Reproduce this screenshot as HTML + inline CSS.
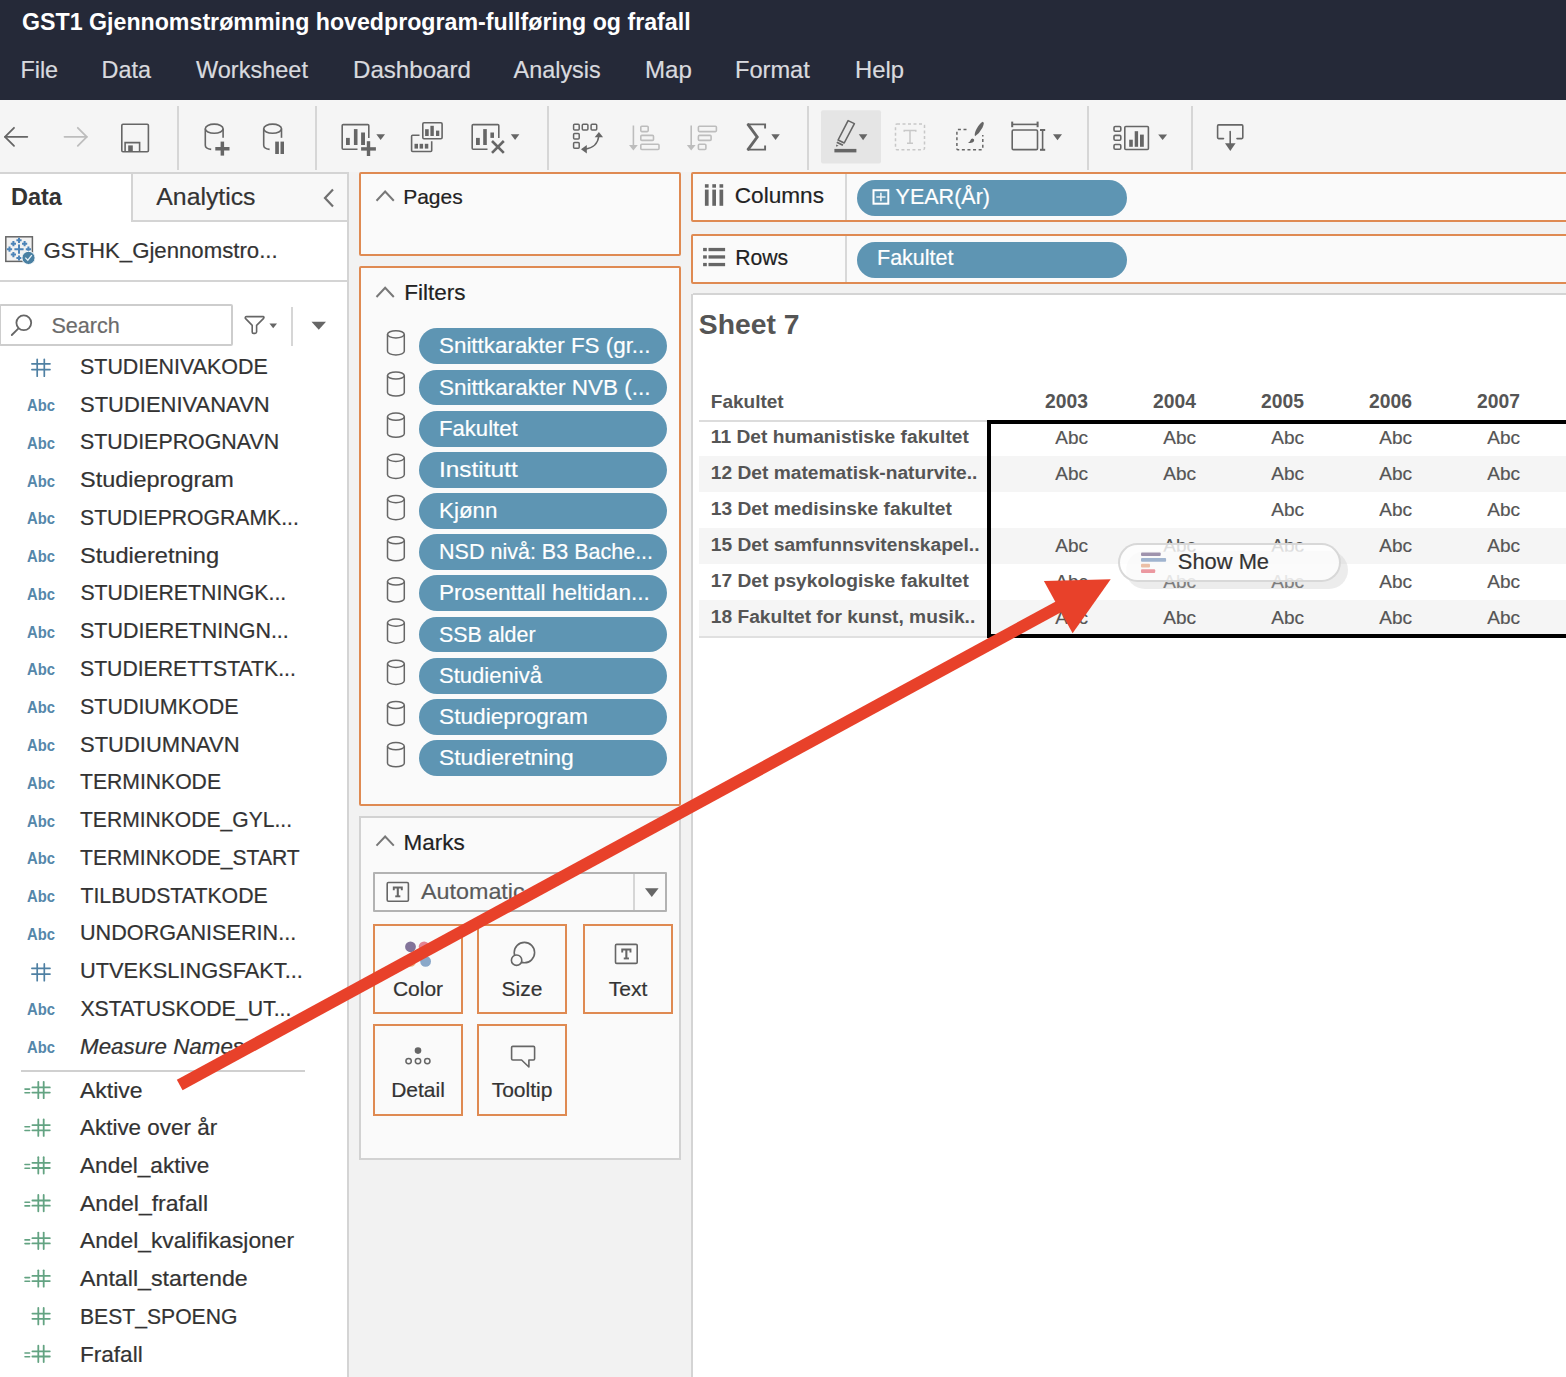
<!DOCTYPE html>
<html><head><meta charset="utf-8"><style>
html,body{margin:0;padding:0;width:1566px;height:1377px;overflow:hidden;background:#fff;font-family:"Liberation Sans", sans-serif;}
.tk{-webkit-text-stroke:0.2px currentColor;}
</style></head><body>
<div style="position:absolute;left:0px;top:0px;width:1566px;height:100px;background:#252938"></div><div style="position:absolute;left:22px;top:11.36px;font-size:23.2px;line-height:1;color:#ffffff;font-weight:bold;font-style:normal;white-space:nowrap;">GST1 Gjennomstrømming hovedprogram-fullføring og frafall</div><div class="tk" style="position:absolute;left:20.4px;top:59.19px;font-size:23.4px;line-height:1;color:#d9dadf;font-weight:normal;font-style:normal;white-space:nowrap;">File</div><div class="tk" style="position:absolute;left:101.6px;top:59.19px;font-size:23.4px;line-height:1;color:#d9dadf;font-weight:normal;font-style:normal;white-space:nowrap;">Data</div><div class="tk" style="position:absolute;left:196.2px;top:59.19px;font-size:23.4px;line-height:1;color:#d9dadf;font-weight:normal;font-style:normal;white-space:nowrap;transform:scaleX(1.0050);transform-origin:0 0;">Worksheet</div><div class="tk" style="position:absolute;left:352.6px;top:59.19px;font-size:23.4px;line-height:1;color:#d9dadf;font-weight:normal;font-style:normal;white-space:nowrap;transform:scaleX(1.0300);transform-origin:0 0;">Dashboard</div><div class="tk" style="position:absolute;left:513.6px;top:59.19px;font-size:23.4px;line-height:1;color:#d9dadf;font-weight:normal;font-style:normal;white-space:nowrap;">Analysis</div><div class="tk" style="position:absolute;left:645px;top:59.19px;font-size:23.4px;line-height:1;color:#d9dadf;font-weight:normal;font-style:normal;white-space:nowrap;transform:scaleX(1.0300);transform-origin:0 0;">Map</div><div class="tk" style="position:absolute;left:735.4px;top:59.19px;font-size:23.4px;line-height:1;color:#d9dadf;font-weight:normal;font-style:normal;white-space:nowrap;transform:scaleX(1.0100);transform-origin:0 0;">Format</div><div class="tk" style="position:absolute;left:855.4px;top:59.19px;font-size:23.4px;line-height:1;color:#d9dadf;font-weight:normal;font-style:normal;white-space:nowrap;transform:scaleX(1.0200);transform-origin:0 0;">Help</div><div style="position:absolute;left:0px;top:100px;width:1566px;height:72px;background:#f5f5f5"></div><div style="position:absolute;left:177px;top:106px;width:2px;height:64px;background:#d6d6d6"></div><div style="position:absolute;left:315px;top:106px;width:2px;height:64px;background:#d6d6d6"></div><div style="position:absolute;left:547px;top:106px;width:2px;height:64px;background:#d6d6d6"></div><div style="position:absolute;left:807px;top:106px;width:2px;height:64px;background:#d6d6d6"></div><div style="position:absolute;left:1087px;top:106px;width:2px;height:64px;background:#d6d6d6"></div><div style="position:absolute;left:1191px;top:106px;width:2px;height:64px;background:#d6d6d6"></div><div style="position:absolute;left:0px;top:172px;width:348px;height:1205px;background:#ffffff"></div><div style="position:absolute;left:347px;top:172px;width:2px;height:1205px;background:#d4d4d4"></div><div style="position:absolute;left:0px;top:172px;width:348px;height:2px;background:#d4d4d4"></div><div style="position:absolute;left:131px;top:174px;width:216px;height:48px;background:#f8f8f8;border-left:2px solid #d4d4d4;border-bottom:2px solid #d4d4d4;box-sizing:border-box"></div><div style="position:absolute;left:11px;top:185.71px;font-size:23.5px;line-height:1;color:#333;font-weight:bold;font-style:normal;white-space:nowrap;">Data</div><div class="tk" style="position:absolute;left:156.3px;top:184.81px;font-size:24.8px;line-height:1;color:#333;font-weight:normal;font-style:normal;white-space:nowrap;">Analytics</div><svg style="position:absolute;left:320px;top:186px;" width="18" height="24" viewBox="0 0 18 24"><polyline points="13,3.5 5,12 13,20.5" fill="none" stroke="#707070" stroke-width="2.2"/></svg><div class="tk" style="position:absolute;left:43.4px;top:239.81px;font-size:22.2px;line-height:1;color:#333;font-weight:normal;font-style:normal;white-space:nowrap;">GSTHK_Gjennomstro...</div><div style="position:absolute;left:0px;top:280px;width:348px;height:2px;background:#d4d4d4"></div><div style="position:absolute;left:-1px;top:304px;width:233.5px;height:42px;border:2px solid #cdcdcd;box-sizing:border-box;background:#fff;border-radius:2px"></div><div class="tk" style="position:absolute;left:51.4px;top:314.52px;font-size:21.6px;line-height:1;color:#6b6b6b;font-weight:normal;font-style:normal;white-space:nowrap;">Search</div><div class="tk" style="position:absolute;left:80.4px;top:356.77px;font-size:21.3px;line-height:1;color:#333;font-weight:normal;font-style:normal;white-space:nowrap;transform:scaleX(1.0065);transform-origin:0 0;">STUDIENIVAKODE</div><div class="tk" style="position:absolute;left:80.4px;top:394.55px;font-size:21.3px;line-height:1;color:#333;font-weight:normal;font-style:normal;white-space:nowrap;transform:scaleX(1.0319);transform-origin:0 0;">STUDIENIVANAVN</div><div style="position:absolute;left:26.6px;top:397.97px;font-size:15.6px;line-height:1;color:#5587aa;font-weight:bold;font-style:normal;white-space:nowrap;transform:scaleX(0.9500);transform-origin:0 0;">Abc</div><div class="tk" style="position:absolute;left:80.4px;top:432.33px;font-size:21.3px;line-height:1;color:#333;font-weight:normal;font-style:normal;white-space:nowrap;transform:scaleX(1.0036);transform-origin:0 0;">STUDIEPROGNAVN</div><div style="position:absolute;left:26.6px;top:435.75px;font-size:15.6px;line-height:1;color:#5587aa;font-weight:bold;font-style:normal;white-space:nowrap;transform:scaleX(0.9500);transform-origin:0 0;">Abc</div><div class="tk" style="position:absolute;left:80.4px;top:470.11px;font-size:21.3px;line-height:1;color:#333;font-weight:normal;font-style:normal;white-space:nowrap;transform:scaleX(1.1014);transform-origin:0 0;">Studieprogram</div><div style="position:absolute;left:26.6px;top:473.53px;font-size:15.6px;line-height:1;color:#5587aa;font-weight:bold;font-style:normal;white-space:nowrap;transform:scaleX(0.9500);transform-origin:0 0;">Abc</div><div class="tk" style="position:absolute;left:80.4px;top:507.89px;font-size:21.3px;line-height:1;color:#333;font-weight:normal;font-style:normal;white-space:nowrap;transform:scaleX(0.9945);transform-origin:0 0;">STUDIEPROGRAMK...</div><div style="position:absolute;left:26.6px;top:511.31px;font-size:15.6px;line-height:1;color:#5587aa;font-weight:bold;font-style:normal;white-space:nowrap;transform:scaleX(0.9500);transform-origin:0 0;">Abc</div><div class="tk" style="position:absolute;left:80.4px;top:545.67px;font-size:21.3px;line-height:1;color:#333;font-weight:normal;font-style:normal;white-space:nowrap;transform:scaleX(1.1081);transform-origin:0 0;">Studieretning</div><div style="position:absolute;left:26.6px;top:549.09px;font-size:15.6px;line-height:1;color:#5587aa;font-weight:bold;font-style:normal;white-space:nowrap;transform:scaleX(0.9500);transform-origin:0 0;">Abc</div><div class="tk" style="position:absolute;left:80.4px;top:583.45px;font-size:21.3px;line-height:1;color:#333;font-weight:normal;font-style:normal;white-space:nowrap;">STUDIERETNINGK...</div><div style="position:absolute;left:26.6px;top:586.87px;font-size:15.6px;line-height:1;color:#5587aa;font-weight:bold;font-style:normal;white-space:nowrap;transform:scaleX(0.9500);transform-origin:0 0;">Abc</div><div class="tk" style="position:absolute;left:80.4px;top:621.23px;font-size:21.3px;line-height:1;color:#333;font-weight:normal;font-style:normal;white-space:nowrap;transform:scaleX(1.0083);transform-origin:0 0;">STUDIERETNINGN...</div><div style="position:absolute;left:26.6px;top:624.65px;font-size:15.6px;line-height:1;color:#5587aa;font-weight:bold;font-style:normal;white-space:nowrap;transform:scaleX(0.9500);transform-origin:0 0;">Abc</div><div class="tk" style="position:absolute;left:80.4px;top:659.01px;font-size:21.3px;line-height:1;color:#333;font-weight:normal;font-style:normal;white-space:nowrap;transform:scaleX(0.9949);transform-origin:0 0;">STUDIERETTSTATK...</div><div style="position:absolute;left:26.6px;top:662.43px;font-size:15.6px;line-height:1;color:#5587aa;font-weight:bold;font-style:normal;white-space:nowrap;transform:scaleX(0.9500);transform-origin:0 0;">Abc</div><div class="tk" style="position:absolute;left:80.4px;top:696.79px;font-size:21.3px;line-height:1;color:#333;font-weight:normal;font-style:normal;white-space:nowrap;transform:scaleX(1.0071);transform-origin:0 0;">STUDIUMKODE</div><div style="position:absolute;left:26.6px;top:700.21px;font-size:15.6px;line-height:1;color:#5587aa;font-weight:bold;font-style:normal;white-space:nowrap;transform:scaleX(0.9500);transform-origin:0 0;">Abc</div><div class="tk" style="position:absolute;left:80.4px;top:734.57px;font-size:21.3px;line-height:1;color:#333;font-weight:normal;font-style:normal;white-space:nowrap;transform:scaleX(1.0327);transform-origin:0 0;">STUDIUMNAVN</div><div style="position:absolute;left:26.6px;top:737.99px;font-size:15.6px;line-height:1;color:#5587aa;font-weight:bold;font-style:normal;white-space:nowrap;transform:scaleX(0.9500);transform-origin:0 0;">Abc</div><div class="tk" style="position:absolute;left:80.4px;top:772.35px;font-size:21.3px;line-height:1;color:#333;font-weight:normal;font-style:normal;white-space:nowrap;transform:scaleX(0.9930);transform-origin:0 0;">TERMINKODE</div><div style="position:absolute;left:26.6px;top:775.77px;font-size:15.6px;line-height:1;color:#5587aa;font-weight:bold;font-style:normal;white-space:nowrap;transform:scaleX(0.9500);transform-origin:0 0;">Abc</div><div class="tk" style="position:absolute;left:80.4px;top:810.13px;font-size:21.3px;line-height:1;color:#333;font-weight:normal;font-style:normal;white-space:nowrap;transform:scaleX(0.9897);transform-origin:0 0;">TERMINKODE_GYL...</div><div style="position:absolute;left:26.6px;top:813.55px;font-size:15.6px;line-height:1;color:#5587aa;font-weight:bold;font-style:normal;white-space:nowrap;transform:scaleX(0.9500);transform-origin:0 0;">Abc</div><div class="tk" style="position:absolute;left:80.4px;top:847.91px;font-size:21.3px;line-height:1;color:#333;font-weight:normal;font-style:normal;white-space:nowrap;transform:scaleX(0.9914);transform-origin:0 0;">TERMINKODE_START</div><div style="position:absolute;left:26.6px;top:851.33px;font-size:15.6px;line-height:1;color:#5587aa;font-weight:bold;font-style:normal;white-space:nowrap;transform:scaleX(0.9500);transform-origin:0 0;">Abc</div><div class="tk" style="position:absolute;left:80.4px;top:885.69px;font-size:21.3px;line-height:1;color:#333;font-weight:normal;font-style:normal;white-space:nowrap;">TILBUDSTATKODE</div><div style="position:absolute;left:26.6px;top:889.11px;font-size:15.6px;line-height:1;color:#5587aa;font-weight:bold;font-style:normal;white-space:nowrap;transform:scaleX(0.9500);transform-origin:0 0;">Abc</div><div class="tk" style="position:absolute;left:80.4px;top:923.47px;font-size:21.3px;line-height:1;color:#333;font-weight:normal;font-style:normal;white-space:nowrap;transform:scaleX(1.0148);transform-origin:0 0;">UNDORGANISERIN...</div><div style="position:absolute;left:26.6px;top:926.89px;font-size:15.6px;line-height:1;color:#5587aa;font-weight:bold;font-style:normal;white-space:nowrap;transform:scaleX(0.9500);transform-origin:0 0;">Abc</div><div class="tk" style="position:absolute;left:80.4px;top:961.25px;font-size:21.3px;line-height:1;color:#333;font-weight:normal;font-style:normal;white-space:nowrap;transform:scaleX(1.0237);transform-origin:0 0;">UTVEKSLINGSFAKT...</div><div class="tk" style="position:absolute;left:80.4px;top:999.03px;font-size:21.3px;line-height:1;color:#333;font-weight:normal;font-style:normal;white-space:nowrap;">XSTATUSKODE_UT...</div><div style="position:absolute;left:26.6px;top:1002.45px;font-size:15.6px;line-height:1;color:#5587aa;font-weight:bold;font-style:normal;white-space:nowrap;transform:scaleX(0.9500);transform-origin:0 0;">Abc</div><div class="tk" style="position:absolute;left:80.4px;top:1036.81px;font-size:21.3px;line-height:1;color:#333;font-weight:normal;font-style:normal;white-space:nowrap;transform:scaleX(1.0500);transform-origin:0 0;"><i>Measure Names</i></div><div style="position:absolute;left:26.6px;top:1040.23px;font-size:15.6px;line-height:1;color:#5587aa;font-weight:bold;font-style:normal;white-space:nowrap;transform:scaleX(0.9500);transform-origin:0 0;">Abc</div><div style="position:absolute;left:21px;top:1070px;width:284px;height:2px;background:#d0d0d0"></div><div class="tk" style="position:absolute;left:80.4px;top:1080.67px;font-size:21.3px;line-height:1;color:#333;font-weight:normal;font-style:normal;white-space:nowrap;transform:scaleX(1.0800);transform-origin:0 0;">Aktive</div><div class="tk" style="position:absolute;left:80.4px;top:1118.37px;font-size:21.3px;line-height:1;color:#333;font-weight:normal;font-style:normal;white-space:nowrap;transform:scaleX(1.0531);transform-origin:0 0;">Aktive over år</div><div class="tk" style="position:absolute;left:80.4px;top:1156.07px;font-size:21.3px;line-height:1;color:#333;font-weight:normal;font-style:normal;white-space:nowrap;transform:scaleX(1.0612);transform-origin:0 0;">Andel_aktive</div><div class="tk" style="position:absolute;left:80.4px;top:1193.77px;font-size:21.3px;line-height:1;color:#333;font-weight:normal;font-style:normal;white-space:nowrap;transform:scaleX(1.0812);transform-origin:0 0;">Andel_frafall</div><div class="tk" style="position:absolute;left:80.4px;top:1231.47px;font-size:21.3px;line-height:1;color:#333;font-weight:normal;font-style:normal;white-space:nowrap;transform:scaleX(1.0695);transform-origin:0 0;">Andel_kvalifikasjoner</div><div class="tk" style="position:absolute;left:80.4px;top:1269.17px;font-size:21.3px;line-height:1;color:#333;font-weight:normal;font-style:normal;white-space:nowrap;transform:scaleX(1.0895);transform-origin:0 0;">Antall_startende</div><div class="tk" style="position:absolute;left:80.4px;top:1306.87px;font-size:21.3px;line-height:1;color:#333;font-weight:normal;font-style:normal;white-space:nowrap;transform:scaleX(0.9923);transform-origin:0 0;">BEST_SPOENG</div><div class="tk" style="position:absolute;left:80.4px;top:1344.57px;font-size:21.3px;line-height:1;color:#333;font-weight:normal;font-style:normal;white-space:nowrap;transform:scaleX(1.0596);transform-origin:0 0;">Frafall</div><div style="position:absolute;left:349px;top:172px;width:345px;height:1205px;background:#f2f2f2"></div><div style="position:absolute;left:691px;top:294px;width:2px;height:1083px;background:#d4d4d4"></div><div style="position:absolute;left:359px;top:172px;width:322px;height:84px;background:#fafafa;border:2px solid #df8a52;box-sizing:border-box;border-radius:2px"></div><div class="tk" style="position:absolute;left:403.2px;top:185.82px;font-size:21px;line-height:1;color:#222;font-weight:normal;font-style:normal;white-space:nowrap;">Pages</div><div style="position:absolute;left:359px;top:266px;width:322px;height:540px;background:#fafafa;border:2px solid #df8a52;box-sizing:border-box;border-radius:2px"></div><div class="tk" style="position:absolute;left:404.2px;top:281.95px;font-size:22.5px;line-height:1;color:#222;font-weight:normal;font-style:normal;white-space:nowrap;">Filters</div><div style="position:absolute;left:419px;top:328.3px;width:248px;height:35.89999999999998px;background:#5e95b3;border-radius:18px"></div><div class="tk" style="position:absolute;left:439px;top:335.34px;font-size:22.4px;line-height:1;color:#ffffff;font-weight:normal;font-style:normal;white-space:nowrap;">Snittkarakter FS (gr...</div><div style="position:absolute;left:419px;top:369.5px;width:248px;height:35.89999999999998px;background:#5e95b3;border-radius:18px"></div><div class="tk" style="position:absolute;left:439px;top:376.53px;font-size:22.4px;line-height:1;color:#ffffff;font-weight:normal;font-style:normal;white-space:nowrap;transform:scaleX(1.0058);transform-origin:0 0;">Snittkarakter NVB (...</div><div style="position:absolute;left:419px;top:410.7px;width:248px;height:35.900000000000034px;background:#5e95b3;border-radius:18px"></div><div class="tk" style="position:absolute;left:439px;top:417.72px;font-size:22.4px;line-height:1;color:#ffffff;font-weight:normal;font-style:normal;white-space:nowrap;transform:scaleX(0.9872);transform-origin:0 0;">Fakultet</div><div style="position:absolute;left:419px;top:451.9px;width:248px;height:35.900000000000034px;background:#5e95b3;border-radius:18px"></div><div class="tk" style="position:absolute;left:439px;top:458.91px;font-size:22.4px;line-height:1;color:#ffffff;font-weight:normal;font-style:normal;white-space:nowrap;transform:scaleX(1.0900);transform-origin:0 0;">Institutt</div><div style="position:absolute;left:419px;top:493.1px;width:248px;height:35.89999999999998px;background:#5e95b3;border-radius:18px"></div><div class="tk" style="position:absolute;left:439px;top:500.10px;font-size:22.4px;line-height:1;color:#ffffff;font-weight:normal;font-style:normal;white-space:nowrap;">Kjønn</div><div style="position:absolute;left:419px;top:534.2px;width:248px;height:35.89999999999998px;background:#5e95b3;border-radius:18px"></div><div class="tk" style="position:absolute;left:439px;top:541.29px;font-size:22.4px;line-height:1;color:#ffffff;font-weight:normal;font-style:normal;white-space:nowrap;transform:scaleX(0.9610);transform-origin:0 0;">NSD nivå: B3 Bache...</div><div style="position:absolute;left:419px;top:575.4px;width:248px;height:35.89999999999998px;background:#5e95b3;border-radius:18px"></div><div class="tk" style="position:absolute;left:439px;top:582.48px;font-size:22.4px;line-height:1;color:#ffffff;font-weight:normal;font-style:normal;white-space:nowrap;transform:scaleX(1.0078);transform-origin:0 0;">Prosenttall heltidan...</div><div style="position:absolute;left:419px;top:616.6px;width:248px;height:35.89999999999998px;background:#5e95b3;border-radius:18px"></div><div class="tk" style="position:absolute;left:439px;top:623.67px;font-size:22.4px;line-height:1;color:#ffffff;font-weight:normal;font-style:normal;white-space:nowrap;transform:scaleX(0.9580);transform-origin:0 0;">SSB alder</div><div style="position:absolute;left:419px;top:657.8px;width:248px;height:35.90000000000009px;background:#5e95b3;border-radius:18px"></div><div class="tk" style="position:absolute;left:439px;top:664.86px;font-size:22.4px;line-height:1;color:#ffffff;font-weight:normal;font-style:normal;white-space:nowrap;transform:scaleX(0.9846);transform-origin:0 0;">Studienivå</div><div style="position:absolute;left:419px;top:699.0px;width:248px;height:35.89999999999998px;background:#5e95b3;border-radius:18px"></div><div class="tk" style="position:absolute;left:439px;top:706.05px;font-size:22.4px;line-height:1;color:#ffffff;font-weight:normal;font-style:normal;white-space:nowrap;transform:scaleX(1.0138);transform-origin:0 0;">Studieprogram</div><div style="position:absolute;left:419px;top:740.2px;width:248px;height:35.89999999999998px;background:#5e95b3;border-radius:18px"></div><div class="tk" style="position:absolute;left:439px;top:747.24px;font-size:22.4px;line-height:1;color:#ffffff;font-weight:normal;font-style:normal;white-space:nowrap;transform:scaleX(1.0215);transform-origin:0 0;">Studieretning</div><div style="position:absolute;left:359px;top:816px;width:322px;height:344px;background:#fafafa;border:2px solid #d2d2d2;box-sizing:border-box"></div><div class="tk" style="position:absolute;left:403.4px;top:831.75px;font-size:22.5px;line-height:1;color:#222;font-weight:normal;font-style:normal;white-space:nowrap;">Marks</div><div style="position:absolute;left:373px;top:872px;width:294px;height:40px;background:#fafafa;border:2px solid #b2b2b2;box-sizing:border-box;border-radius:1px"></div><div style="position:absolute;left:633px;top:874px;width:2px;height:36px;background:#d6d6d6"></div><div class="tk" style="position:absolute;left:420.6px;top:881.38px;font-size:22px;line-height:1;color:#5a5a5a;font-weight:normal;font-style:normal;white-space:nowrap;transform:scaleX(1.0600);transform-origin:0 0;">Automatic</div><div style="position:absolute;left:373px;top:924px;width:90px;height:90px;border:2px solid #df8a52;box-sizing:border-box"></div><div class="tk" style="position:absolute;left:418.0px;top:978.42px;font-size:21px;line-height:1;color:#333;font-weight:normal;font-style:normal;white-space:nowrap;transform:translateX(-50%)">Color</div><div style="position:absolute;left:477px;top:924px;width:90px;height:90px;border:2px solid #df8a52;box-sizing:border-box"></div><div class="tk" style="position:absolute;left:522.0px;top:978.42px;font-size:21px;line-height:1;color:#333;font-weight:normal;font-style:normal;white-space:nowrap;transform:translateX(-50%)">Size</div><div style="position:absolute;left:583px;top:924px;width:90px;height:90px;border:2px solid #df8a52;box-sizing:border-box"></div><div class="tk" style="position:absolute;left:628.0px;top:978.42px;font-size:21px;line-height:1;color:#333;font-weight:normal;font-style:normal;white-space:nowrap;transform:translateX(-50%)">Text</div><div style="position:absolute;left:373px;top:1024px;width:90px;height:92px;border:2px solid #df8a52;box-sizing:border-box"></div><div class="tk" style="position:absolute;left:418.0px;top:1078.82px;font-size:21px;line-height:1;color:#333;font-weight:normal;font-style:normal;white-space:nowrap;transform:translateX(-50%)">Detail</div><div style="position:absolute;left:477px;top:1024px;width:90px;height:92px;border:2px solid #df8a52;box-sizing:border-box"></div><div class="tk" style="position:absolute;left:522.0px;top:1078.82px;font-size:21px;line-height:1;color:#333;font-weight:normal;font-style:normal;white-space:nowrap;transform:translateX(-50%)">Tooltip</div><div style="position:absolute;left:693px;top:172px;width:873px;height:122px;background:#f2f2f2"></div><div style="position:absolute;left:691px;top:172px;width:909px;height:50px;background:#fafafa;border:2px solid #df8a52;box-sizing:border-box;border-radius:2px"></div><div style="position:absolute;left:845px;top:174px;width:2px;height:46px;background:#d8d8d8"></div><div class="tk" style="position:absolute;left:734.8px;top:185.27px;font-size:22.6px;line-height:1;color:#222;font-weight:normal;font-style:normal;white-space:nowrap;">Columns</div><div style="position:absolute;left:857px;top:180.3px;width:270.20000000000005px;height:35.5px;background:#5e95b3;border-radius:18px"></div><div class="tk" style="position:absolute;left:895.6px;top:186.80px;font-size:21.5px;line-height:1;color:#fff;font-weight:normal;font-style:normal;white-space:nowrap;">YEAR(År)</div><div style="position:absolute;left:691px;top:234px;width:909px;height:50px;background:#fafafa;border:2px solid #df8a52;box-sizing:border-box;border-radius:2px"></div><div style="position:absolute;left:845px;top:236px;width:2px;height:46px;background:#d8d8d8"></div><div class="tk" style="position:absolute;left:735.2px;top:247.45px;font-size:21.2px;line-height:1;color:#222;font-weight:normal;font-style:normal;white-space:nowrap;">Rows</div><div style="position:absolute;left:857px;top:242.3px;width:270.20000000000005px;height:35.5px;background:#5e95b3;border-radius:18px"></div><div class="tk" style="position:absolute;left:877.0px;top:248.00px;font-size:21.5px;line-height:1;color:#fff;font-weight:normal;font-style:normal;white-space:nowrap;">Fakultet</div><div style="position:absolute;left:693px;top:295px;width:873px;height:1082px;background:#ffffff"></div><div style="position:absolute;left:693px;top:293px;width:873px;height:2px;background:#d4d4d4"></div><div style="position:absolute;left:698.8px;top:310.24px;font-size:28.3px;line-height:1;color:#555;font-weight:bold;font-style:normal;white-space:nowrap;">Sheet 7</div><div style="position:absolute;left:710.8px;top:391.52px;font-size:19px;line-height:1;color:#555;font-weight:bold;font-style:normal;white-space:nowrap;">Fakultet</div><div style="position:absolute;right:478px;top:391.66px;font-size:19.3px;line-height:1;color:#555;font-weight:bold;font-style:normal;white-space:nowrap;">2003</div><div style="position:absolute;right:370px;top:391.66px;font-size:19.3px;line-height:1;color:#555;font-weight:bold;font-style:normal;white-space:nowrap;">2004</div><div style="position:absolute;right:262px;top:391.66px;font-size:19.3px;line-height:1;color:#555;font-weight:bold;font-style:normal;white-space:nowrap;">2005</div><div style="position:absolute;right:154px;top:391.66px;font-size:19.3px;line-height:1;color:#555;font-weight:bold;font-style:normal;white-space:nowrap;">2006</div><div style="position:absolute;right:46px;top:391.66px;font-size:19.3px;line-height:1;color:#555;font-weight:bold;font-style:normal;white-space:nowrap;">2007</div><div style="position:absolute;left:699px;top:420px;width:288px;height:2px;background:#dcdcdc"></div><div style="position:absolute;left:699px;top:456px;width:867px;height:36px;background:#f5f5f5"></div><div style="position:absolute;left:699px;top:528px;width:867px;height:36px;background:#f5f5f5"></div><div style="position:absolute;left:699px;top:600px;width:867px;height:36px;background:#f5f5f5"></div><div style="position:absolute;left:699px;top:636px;width:288px;height:2px;background:#e0e0e0"></div><div style="position:absolute;left:710.8px;top:427.05px;font-size:19.2px;line-height:1;color:#555;font-weight:bold;font-style:normal;white-space:nowrap;">11 Det humanistiske fakultet</div><div class="tk" style="position:absolute;right:478px;top:427.92px;font-size:19px;line-height:1;color:#555;font-weight:normal;font-style:normal;white-space:nowrap;">Abc</div><div class="tk" style="position:absolute;right:370px;top:427.92px;font-size:19px;line-height:1;color:#555;font-weight:normal;font-style:normal;white-space:nowrap;">Abc</div><div class="tk" style="position:absolute;right:262px;top:427.92px;font-size:19px;line-height:1;color:#555;font-weight:normal;font-style:normal;white-space:nowrap;">Abc</div><div class="tk" style="position:absolute;right:154px;top:427.92px;font-size:19px;line-height:1;color:#555;font-weight:normal;font-style:normal;white-space:nowrap;">Abc</div><div class="tk" style="position:absolute;right:46px;top:427.92px;font-size:19px;line-height:1;color:#555;font-weight:normal;font-style:normal;white-space:nowrap;">Abc</div><div style="position:absolute;left:710.8px;top:463.05px;font-size:19.2px;line-height:1;color:#555;font-weight:bold;font-style:normal;white-space:nowrap;">12 Det matematisk-naturvite..</div><div class="tk" style="position:absolute;right:478px;top:463.92px;font-size:19px;line-height:1;color:#555;font-weight:normal;font-style:normal;white-space:nowrap;">Abc</div><div class="tk" style="position:absolute;right:370px;top:463.92px;font-size:19px;line-height:1;color:#555;font-weight:normal;font-style:normal;white-space:nowrap;">Abc</div><div class="tk" style="position:absolute;right:262px;top:463.92px;font-size:19px;line-height:1;color:#555;font-weight:normal;font-style:normal;white-space:nowrap;">Abc</div><div class="tk" style="position:absolute;right:154px;top:463.92px;font-size:19px;line-height:1;color:#555;font-weight:normal;font-style:normal;white-space:nowrap;">Abc</div><div class="tk" style="position:absolute;right:46px;top:463.92px;font-size:19px;line-height:1;color:#555;font-weight:normal;font-style:normal;white-space:nowrap;">Abc</div><div style="position:absolute;left:710.8px;top:499.05px;font-size:19.2px;line-height:1;color:#555;font-weight:bold;font-style:normal;white-space:nowrap;">13 Det medisinske fakultet</div><div class="tk" style="position:absolute;right:262px;top:499.92px;font-size:19px;line-height:1;color:#555;font-weight:normal;font-style:normal;white-space:nowrap;">Abc</div><div class="tk" style="position:absolute;right:154px;top:499.92px;font-size:19px;line-height:1;color:#555;font-weight:normal;font-style:normal;white-space:nowrap;">Abc</div><div class="tk" style="position:absolute;right:46px;top:499.92px;font-size:19px;line-height:1;color:#555;font-weight:normal;font-style:normal;white-space:nowrap;">Abc</div><div style="position:absolute;left:710.8px;top:535.05px;font-size:19.2px;line-height:1;color:#555;font-weight:bold;font-style:normal;white-space:nowrap;">15 Det samfunnsvitenskapel..</div><div class="tk" style="position:absolute;right:478px;top:535.92px;font-size:19px;line-height:1;color:#555;font-weight:normal;font-style:normal;white-space:nowrap;">Abc</div><div class="tk" style="position:absolute;right:370px;top:535.92px;font-size:19px;line-height:1;color:#555;font-weight:normal;font-style:normal;white-space:nowrap;">Abc</div><div class="tk" style="position:absolute;right:262px;top:535.92px;font-size:19px;line-height:1;color:#555;font-weight:normal;font-style:normal;white-space:nowrap;">Abc</div><div class="tk" style="position:absolute;right:154px;top:535.92px;font-size:19px;line-height:1;color:#555;font-weight:normal;font-style:normal;white-space:nowrap;">Abc</div><div class="tk" style="position:absolute;right:46px;top:535.92px;font-size:19px;line-height:1;color:#555;font-weight:normal;font-style:normal;white-space:nowrap;">Abc</div><div style="position:absolute;left:710.8px;top:571.05px;font-size:19.2px;line-height:1;color:#555;font-weight:bold;font-style:normal;white-space:nowrap;">17 Det psykologiske fakultet</div><div class="tk" style="position:absolute;right:478px;top:571.92px;font-size:19px;line-height:1;color:#555;font-weight:normal;font-style:normal;white-space:nowrap;">Abc</div><div class="tk" style="position:absolute;right:370px;top:571.92px;font-size:19px;line-height:1;color:#555;font-weight:normal;font-style:normal;white-space:nowrap;">Abc</div><div class="tk" style="position:absolute;right:262px;top:571.92px;font-size:19px;line-height:1;color:#555;font-weight:normal;font-style:normal;white-space:nowrap;">Abc</div><div class="tk" style="position:absolute;right:154px;top:571.92px;font-size:19px;line-height:1;color:#555;font-weight:normal;font-style:normal;white-space:nowrap;">Abc</div><div class="tk" style="position:absolute;right:46px;top:571.92px;font-size:19px;line-height:1;color:#555;font-weight:normal;font-style:normal;white-space:nowrap;">Abc</div><div style="position:absolute;left:710.8px;top:607.05px;font-size:19.2px;line-height:1;color:#555;font-weight:bold;font-style:normal;white-space:nowrap;">18 Fakultet for kunst, musik..</div><div class="tk" style="position:absolute;right:478px;top:607.92px;font-size:19px;line-height:1;color:#555;font-weight:normal;font-style:normal;white-space:nowrap;">Abc</div><div class="tk" style="position:absolute;right:370px;top:607.92px;font-size:19px;line-height:1;color:#555;font-weight:normal;font-style:normal;white-space:nowrap;">Abc</div><div class="tk" style="position:absolute;right:262px;top:607.92px;font-size:19px;line-height:1;color:#555;font-weight:normal;font-style:normal;white-space:nowrap;">Abc</div><div class="tk" style="position:absolute;right:154px;top:607.92px;font-size:19px;line-height:1;color:#555;font-weight:normal;font-style:normal;white-space:nowrap;">Abc</div><div class="tk" style="position:absolute;right:46px;top:607.92px;font-size:19px;line-height:1;color:#555;font-weight:normal;font-style:normal;white-space:nowrap;">Abc</div><div style="position:absolute;left:987px;top:420px;width:613px;height:218px;border:4px solid #000;box-sizing:border-box"></div><svg style="position:absolute;left:0px;top:0px;pointer-events:none" width="1566" height="1377" viewBox="0 0 1566 1377"><g fill="none" stroke="#666666" stroke-width="1.8" stroke-linecap="round" stroke-linejoin="round"><polyline points="14,127.8 5,136.8 14,145.8"/><line x1="5" y1="136.8" x2="27.3" y2="136.8"/></g><g fill="none" stroke="#bdbdbd" stroke-width="1.8" stroke-linecap="round" stroke-linejoin="round"><polyline points="77.8,127.8 86.8,136.8 77.8,145.8"/><line x1="64.5" y1="136.8" x2="86.8" y2="136.8"/></g><g fill="none" stroke="#666666" stroke-width="1.6"><rect x="121.8" y="124.2" width="26.6" height="27.6" rx="1.2"/><polyline points="125.1,151.8 125.1,142.6 139.6,142.6 139.6,151.8"/></g><rect x="128.2" y="145.4" width="4.6" height="6" fill="#666666"/><g fill="none" stroke="#666666" stroke-width="1.6"><ellipse cx="214.2" cy="128.7" rx="8.9" ry="4.6"/><path d="M205.29999999999998,128.7 V145.3 Q205.29999999999998,148.8 211.2,149.4"/><line x1="223.1" y1="128.7" x2="223.1" y2="137.8"/></g><rect x="215.3" y="147.0" width="14.2" height="3.5" fill="#666666"/><rect x="220.6" y="141.6" width="3.5" height="14" fill="#666666"/><g fill="none" stroke="#666666" stroke-width="1.6"><ellipse cx="272.6" cy="128.7" rx="8.9" ry="4.6"/><path d="M263.70000000000005,128.7 V145.3 Q263.70000000000005,148.8 269.6,149.4"/><line x1="281.5" y1="128.7" x2="281.5" y2="137.8"/></g><rect x="275.2" y="141.6" width="3.7" height="12.4" fill="#666666"/><rect x="280.5" y="141.6" width="3.5" height="12.4" fill="#666666"/><g fill="none" stroke="#666666" stroke-width="1.6"><path d="M357.5,149.2 H343.2 Q342.2,149.2 342.2,148.2 V125.6 Q342.2,124.6 343.2,124.6 H367.8 Q368.8,124.6 368.8,125.6 V137.9"/></g><g fill="#666666"><rect x="346" y="137.9" width="3.8" height="7.1"/><rect x="353.9" y="129.1" width="3.6" height="15.9"/><rect x="361.1" y="132.5" width="3.9" height="12.5"/><rect x="361.1" y="147.2" width="14.8" height="3.4"/><rect x="366.8" y="141.2" width="3.4" height="14.8"/><polygon points="376.3,134.2 385,134.2 380.65,140.1"/></g><g fill="none" stroke="#666666" stroke-width="1.6"><rect x="422.8" y="122.7" width="19.3" height="16" rx="1.2"/><path d="M419.5,135.3 H412.6 Q411.6,135.3 411.6,136.3 V150.5 Q411.6,151.5 412.6,151.5 H430.7 Q431.7,151.5 431.7,150.5 V141.2"/></g><g fill="#666666"><rect x="425.1" y="129.2" width="3.6" height="6.8"/><rect x="430.4" y="125.8" width="3.4" height="10.2"/><rect x="436" y="130.6" width="3.3" height="5.4"/><rect x="414.5" y="143.8" width="3.5" height="4.8"/><rect x="419.6" y="143.8" width="3.5" height="4.8"/><rect x="424.8" y="143.8" width="3.5" height="4.8"/></g><g fill="none" stroke="#666666" stroke-width="1.6"><path d="M487.5,149.2 H473.2 Q472.2,149.2 472.2,148.2 V125.6 Q472.2,124.6 473.2,124.6 H497.8 Q498.8,124.6 498.8,125.6 V137.9"/></g><g fill="#666666"><rect x="476" y="137.9" width="3.8" height="7.1"/><rect x="483.2" y="129.1" width="3.6" height="15.9"/><rect x="490.4" y="132.5" width="3.6" height="5.4"/><polygon points="510.8,134.2 519.4,134.2 515.1,140.1"/></g><g stroke="#666666" stroke-width="2.6"><line x1="492" y1="141" x2="503.8" y2="152.8"/><line x1="503.8" y1="141" x2="492" y2="152.8"/></g><g fill="none" stroke="#666666" stroke-width="1.5"><rect x="573.6" y="124.3" width="5.6" height="5.6" rx="1"/><rect x="582.3" y="124.3" width="5.6" height="5.6" rx="1"/><rect x="591.1" y="124.3" width="5.6" height="5.6" rx="1"/><rect x="573.6" y="133.5" width="5.6" height="5.6" rx="1"/><rect x="573.6" y="142.6" width="5.6" height="5.6" rx="1"/><path d="M585,149.2 Q597.5,147.5 598.8,136"/></g><g fill="#666666"><polygon points="594.7,137.2 598.9,131.9 603.1,137.2"/><polygon points="581,149.2 586.8,145 586.8,153.5"/></g><g fill="none" stroke="#bdbdbd" stroke-width="1.6"><line x1="633.4" y1="125.5" x2="633.4" y2="146"/><rect x="640.8" y="126.2" width="7.4" height="5.4" rx="1"/><rect x="640.8" y="135.4" width="12.7" height="5" rx="1"/><rect x="640.8" y="144.3" width="18.2" height="5.2" rx="1"/></g><polygon points="629,145 637.8,145 633.4,150.4" fill="#bdbdbd"/><g fill="none" stroke="#bdbdbd" stroke-width="1.6"><line x1="691.2" y1="125.5" x2="691.2" y2="146"/><rect x="698.4" y="126.2" width="18" height="5.4" rx="1"/><rect x="698.4" y="135.4" width="12.7" height="5" rx="1"/><rect x="698.4" y="144.3" width="7.5" height="5.2" rx="1"/></g><polygon points="686.8,145 695.6,145 691.2,150.4" fill="#bdbdbd"/><g fill="none" stroke="#666666" stroke-width="1.9"><polyline points="765.1,128.4 765.1,124.4 747.2,124.4"/><polyline points="747.2,149.6 765.1,149.6 765.1,145.4"/></g><g fill="none" stroke="#666666" stroke-width="2.9" stroke-linejoin="miter"><polyline points="747.6,123.8 757.2,137 747.6,150.2"/></g><polygon points="771.3,134.3 779.8,134.3 775.55,140" fill="#666666"/><rect x="821" y="110.2" width="60" height="53.4" rx="2" fill="#e5e5e5"/><g fill="none" stroke="#666666" stroke-width="1.6" stroke-linejoin="round"><polygon points="848.1,120.6 854.4,123.6 844.2,143 838.1,140"/></g><g fill="#666666"><polygon points="837.2,141.4 843.4,144.6 842.5,146 836.4,142.9"/><polygon points="836.1,144.4 838.6,145.8 836.2,146.8"/><rect x="834.4" y="148.9" width="22" height="3.5"/><polygon points="858.8,134.3 867.4,134.3 863.1,140.3"/></g><g fill="none" stroke="#c8c8c8" stroke-width="1.5"><rect x="895.5" y="124" width="29" height="25.7" rx="1.5" stroke-dasharray="3,2.5"/><path d="M904.2,131.8 V130.6 H915.8 V131.8 M910,130.6 V143.2 M907,143.2 H913"/></g><g fill="none" stroke="#666666" stroke-width="1.5"><path d="M966.5,129.6 H957.8 Q956.9,129.6 956.9,130.5 V148.8 Q956.9,149.7 957.8,149.7 H981.9 Q982.8,149.7 982.8,148.8 V135" stroke-dasharray="3,2.6"/></g><g fill="#666666"><path d="M982.8,121.8 Q985,122.5 982.4,127.7 Q979.5,133.4 975,136.3 Q974,133.8 976.5,129 Q979.4,123.5 982.8,121.8 Z"/><path d="M972.4,138.5 Q975,139 973.8,141.6 Q972.5,143.6 968,142.8 Q970.4,141.5 970.6,140 Q971,138.6 972.4,138.5Z"/></g><g fill="none" stroke="#666666" stroke-width="1.6"><rect x="1012.2" y="130" width="25.3" height="19.6" rx="1.2"/><line x1="1012" y1="124.4" x2="1037.6" y2="124.4"/><line x1="1042.6" y1="130" x2="1042.6" y2="149.7"/></g><g fill="#666666"><rect x="1011.2" y="121.6" width="2" height="5.6"/><rect x="1036.6" y="121.6" width="2" height="5.6"/><rect x="1040" y="129" width="5.2" height="2"/><rect x="1040" y="148.8" width="5.2" height="2"/><polygon points="1053,134.3 1062,134.3 1057.5,140.3"/></g><g fill="none" stroke="#666666" stroke-width="1.6"><rect x="1114" y="126.5" width="6.8" height="4.8" rx="1.2"/><rect x="1114" y="135.4" width="6.8" height="4.8" rx="1.2"/><rect x="1114" y="144.5" width="6.8" height="4.8" rx="1.2"/><rect x="1124.8" y="126.5" width="23.6" height="23" rx="1"/></g><g fill="#666666"><rect x="1129.2" y="139.7" width="3.6" height="7.1"/><rect x="1134.7" y="131.2" width="3.4" height="15.6"/><rect x="1140" y="134.6" width="3.8" height="12.2"/><polygon points="1158.2,134.4 1167.1,134.4 1162.65,139.9"/></g><g fill="none" stroke="#666666" stroke-width="1.6" stroke-linecap="round"><path d="M1223.5,138.6 H1218.6 Q1217.6,138.6 1217.6,137.6 V125.9 Q1217.6,124.9 1218.6,124.9 H1241.8 Q1242.8,124.9 1242.8,125.9 V137.6 Q1242.8,138.6 1241.8,138.6 H1237"/><line x1="1230.2" y1="131.6" x2="1230.2" y2="144"/></g><polygon points="1225,143.2 1235.6,143.2 1230.3,151" fill="#666666"/><rect x="5.8" y="236.8" width="26.6" height="24.6" fill="#f2f2f2" stroke="#666666" stroke-width="1.5"/><g fill="none"><path d="M14.4,249.2 H23.6 M19,244.6 V253.79999999999998" stroke="#4d84b8" stroke-width="2.0"/><path d="M10.8,243.7 H16.0 M13.4,241.1 V246.29999999999998" stroke="#4d84b8" stroke-width="2.0"/><path d="M22.0,243.7 H27.200000000000003 M24.6,241.1 V246.29999999999998" stroke="#4d84b8" stroke-width="2.0"/><path d="M6.9,249.2 H12.1 M9.5,246.6 V251.79999999999998" stroke="#4d84b8" stroke-width="2.0"/><path d="M10.8,254.6 H16.0 M13.4,252.0 V257.2" stroke="#4d84b8" stroke-width="2.0"/><path d="M16.4,240.3 H21.6 M19,237.70000000000002 V242.9" stroke="#4d84b8" stroke-width="2.0"/><path d="M25.799999999999997,249.2 H31.0 M28.4,246.6 V251.79999999999998" stroke="#4d84b8" stroke-width="2.0"/><path d="M16.4,258 H21.6 M19,255.4 V260.6" stroke="#4d84b8" stroke-width="2.0"/></g><circle cx="28.5" cy="257.9" r="6.6" fill="#4a80a2" stroke="#fff" stroke-width="1"/><polyline points="25.3,257.6 27.8,260.2 31.8,255.2" fill="none" stroke="#e8f0f5" stroke-width="1.3"/><g fill="none" stroke="#666666" stroke-width="1.8" stroke-linecap="round"><circle cx="23.8" cy="322.8" r="7.4"/><line x1="18.5" y1="328.3" x2="11.8" y2="335"/></g><path d="M246.6,316.6 H263 Q264.6,316.8 263.6,318.4 L256.6,325.4 V332 Q256.4,333.4 255,333.4 H253.6 Q252.2,333.4 252.2,332 V325.4 L245.4,318.4 Q244.8,316.8 246.6,316.6 Z" fill="none" stroke="#666666" stroke-width="1.6" stroke-linejoin="round"/><polygon points="269.4,323.4 277,323.4 273.2,328.2" fill="#666666"/><rect x="291" y="307" width="2" height="39" fill="#d6d6d6"/><polygon points="311.5,321.8 326,321.8 318.75,329.8" fill="#666666"/><g stroke="#4f80a3" stroke-width="1.7" stroke-linecap="round"><line x1="37.2" y1="359.4" x2="37.2" y2="376.2"/><line x1="44.3" y1="359.4" x2="44.3" y2="376.2"/><line x1="31.9" y1="363.8" x2="50" y2="363.8"/><line x1="31.9" y1="369.6" x2="50" y2="369.6"/></g><g stroke="#4f80a3" stroke-width="1.7" stroke-linecap="round"><line x1="37.2" y1="963.88" x2="37.2" y2="980.6800000000001"/><line x1="44.3" y1="963.88" x2="44.3" y2="980.6800000000001"/><line x1="31.9" y1="968.28" x2="50" y2="968.28"/><line x1="31.9" y1="974.08" x2="50" y2="974.08"/></g><g stroke="#63a382" stroke-width="1.8" stroke-linecap="round"><line x1="38.3" y1="1081.8" x2="38.3" y2="1098.2"/><line x1="43.7" y1="1081.8" x2="43.7" y2="1098.2"/><line x1="32.4" y1="1087.3999999999999" x2="49.8" y2="1087.3999999999999"/><line x1="32.4" y1="1092.6" x2="49.8" y2="1092.6"/></g><g stroke="#63a382" stroke-width="1.6" stroke-linecap="round"><line x1="25" y1="1089.1" x2="29.6" y2="1089.1"/><line x1="25" y1="1092.8" x2="29.6" y2="1092.8"/></g><g stroke="#63a382" stroke-width="1.8" stroke-linecap="round"><line x1="38.3" y1="1119.5" x2="38.3" y2="1135.9"/><line x1="43.7" y1="1119.5" x2="43.7" y2="1135.9"/><line x1="32.4" y1="1125.1" x2="49.8" y2="1125.1"/><line x1="32.4" y1="1130.3" x2="49.8" y2="1130.3"/></g><g stroke="#63a382" stroke-width="1.6" stroke-linecap="round"><line x1="25" y1="1126.8" x2="29.6" y2="1126.8"/><line x1="25" y1="1130.5" x2="29.6" y2="1130.5"/></g><g stroke="#63a382" stroke-width="1.8" stroke-linecap="round"><line x1="38.3" y1="1157.2" x2="38.3" y2="1173.6000000000001"/><line x1="43.7" y1="1157.2" x2="43.7" y2="1173.6000000000001"/><line x1="32.4" y1="1162.8" x2="49.8" y2="1162.8"/><line x1="32.4" y1="1168.0" x2="49.8" y2="1168.0"/></g><g stroke="#63a382" stroke-width="1.6" stroke-linecap="round"><line x1="25" y1="1164.5" x2="29.6" y2="1164.5"/><line x1="25" y1="1168.2" x2="29.6" y2="1168.2"/></g><g stroke="#63a382" stroke-width="1.8" stroke-linecap="round"><line x1="38.3" y1="1194.8999999999999" x2="38.3" y2="1211.3"/><line x1="43.7" y1="1194.8999999999999" x2="43.7" y2="1211.3"/><line x1="32.4" y1="1200.4999999999998" x2="49.8" y2="1200.4999999999998"/><line x1="32.4" y1="1205.6999999999998" x2="49.8" y2="1205.6999999999998"/></g><g stroke="#63a382" stroke-width="1.6" stroke-linecap="round"><line x1="25" y1="1202.1999999999998" x2="29.6" y2="1202.1999999999998"/><line x1="25" y1="1205.8999999999999" x2="29.6" y2="1205.8999999999999"/></g><g stroke="#63a382" stroke-width="1.8" stroke-linecap="round"><line x1="38.3" y1="1232.6" x2="38.3" y2="1249.0"/><line x1="43.7" y1="1232.6" x2="43.7" y2="1249.0"/><line x1="32.4" y1="1238.1999999999998" x2="49.8" y2="1238.1999999999998"/><line x1="32.4" y1="1243.3999999999999" x2="49.8" y2="1243.3999999999999"/></g><g stroke="#63a382" stroke-width="1.6" stroke-linecap="round"><line x1="25" y1="1239.8999999999999" x2="29.6" y2="1239.8999999999999"/><line x1="25" y1="1243.6" x2="29.6" y2="1243.6"/></g><g stroke="#63a382" stroke-width="1.8" stroke-linecap="round"><line x1="38.3" y1="1270.3" x2="38.3" y2="1286.7"/><line x1="43.7" y1="1270.3" x2="43.7" y2="1286.7"/><line x1="32.4" y1="1275.8999999999999" x2="49.8" y2="1275.8999999999999"/><line x1="32.4" y1="1281.1" x2="49.8" y2="1281.1"/></g><g stroke="#63a382" stroke-width="1.6" stroke-linecap="round"><line x1="25" y1="1277.6" x2="29.6" y2="1277.6"/><line x1="25" y1="1281.3" x2="29.6" y2="1281.3"/></g><g stroke="#63a382" stroke-width="1.8" stroke-linecap="round"><line x1="38.3" y1="1308.0" x2="38.3" y2="1324.4"/><line x1="43.7" y1="1308.0" x2="43.7" y2="1324.4"/><line x1="32.4" y1="1313.6" x2="49.8" y2="1313.6"/><line x1="32.4" y1="1318.8" x2="49.8" y2="1318.8"/></g><g stroke="#63a382" stroke-width="1.8" stroke-linecap="round"><line x1="38.3" y1="1345.7" x2="38.3" y2="1362.1000000000001"/><line x1="43.7" y1="1345.7" x2="43.7" y2="1362.1000000000001"/><line x1="32.4" y1="1351.3" x2="49.8" y2="1351.3"/><line x1="32.4" y1="1356.5" x2="49.8" y2="1356.5"/></g><g stroke="#63a382" stroke-width="1.6" stroke-linecap="round"><line x1="25" y1="1353.0" x2="29.6" y2="1353.0"/><line x1="25" y1="1356.7" x2="29.6" y2="1356.7"/></g><polyline points="376.5,200.8 385.15,191.5 393.8,200.8" fill="none" stroke="#787878" stroke-width="2.0"/><polyline points="376.5,297.0 385.15,287.8 393.8,297.0" fill="none" stroke="#787878" stroke-width="2.0"/><polyline points="376.5,845.6 385.15,836.5 393.8,845.6" fill="none" stroke="#787878" stroke-width="2.0"/><g fill="none" stroke="#666666" stroke-width="1.5"><ellipse cx="395.9" cy="334.3" rx="8.400000000000006" ry="3.6"/><path d="M387.5,334.3 V351.3 A8.400000000000006,3.6 0 0 0 404.3,351.3 V334.3"/></g><g fill="none" stroke="#666666" stroke-width="1.5"><ellipse cx="395.9" cy="375.49" rx="8.400000000000006" ry="3.6"/><path d="M387.5,375.49 V392.49 A8.400000000000006,3.6 0 0 0 404.3,392.49 V375.49"/></g><g fill="none" stroke="#666666" stroke-width="1.5"><ellipse cx="395.9" cy="416.68" rx="8.400000000000006" ry="3.6"/><path d="M387.5,416.68 V433.68 A8.400000000000006,3.6 0 0 0 404.3,433.68 V416.68"/></g><g fill="none" stroke="#666666" stroke-width="1.5"><ellipse cx="395.9" cy="457.87" rx="8.400000000000006" ry="3.6"/><path d="M387.5,457.87 V474.87 A8.400000000000006,3.6 0 0 0 404.3,474.87 V457.87"/></g><g fill="none" stroke="#666666" stroke-width="1.5"><ellipse cx="395.9" cy="499.06" rx="8.400000000000006" ry="3.6"/><path d="M387.5,499.06 V516.06 A8.400000000000006,3.6 0 0 0 404.3,516.06 V499.06"/></g><g fill="none" stroke="#666666" stroke-width="1.5"><ellipse cx="395.9" cy="540.25" rx="8.400000000000006" ry="3.6"/><path d="M387.5,540.25 V557.25 A8.400000000000006,3.6 0 0 0 404.3,557.25 V540.25"/></g><g fill="none" stroke="#666666" stroke-width="1.5"><ellipse cx="395.9" cy="581.44" rx="8.400000000000006" ry="3.6"/><path d="M387.5,581.44 V598.44 A8.400000000000006,3.6 0 0 0 404.3,598.44 V581.44"/></g><g fill="none" stroke="#666666" stroke-width="1.5"><ellipse cx="395.9" cy="622.63" rx="8.400000000000006" ry="3.6"/><path d="M387.5,622.63 V639.63 A8.400000000000006,3.6 0 0 0 404.3,639.63 V622.63"/></g><g fill="none" stroke="#666666" stroke-width="1.5"><ellipse cx="395.9" cy="663.8199999999999" rx="8.400000000000006" ry="3.6"/><path d="M387.5,663.8199999999999 V680.8199999999999 A8.400000000000006,3.6 0 0 0 404.3,680.8199999999999 V663.8199999999999"/></g><g fill="none" stroke="#666666" stroke-width="1.5"><ellipse cx="395.9" cy="705.01" rx="8.400000000000006" ry="3.6"/><path d="M387.5,705.01 V722.01 A8.400000000000006,3.6 0 0 0 404.3,722.01 V705.01"/></g><g fill="none" stroke="#666666" stroke-width="1.5"><ellipse cx="395.9" cy="746.2" rx="8.400000000000006" ry="3.6"/><path d="M387.5,746.2 V763.2 A8.400000000000006,3.6 0 0 0 404.3,763.2 V746.2"/></g><g fill="none" stroke="#666666" stroke-width="1.6"><rect x="387.2" y="882.5" width="21.19999999999999" height="18.700000000000045" rx="1.2"/><path d="M393.77199999999993,890.354 V887.549 H401.828 V890.354" stroke-width="1.9"/><path d="M397.79999999999995,887.549 V896.3380000000001" stroke-width="2.1"/><path d="M395.256,896.3380000000001 H400.34399999999994" stroke-width="1.9"/></g><polygon points="645,888.2 658.6,888.2 651.8,897" fill="#666666"/><circle cx="410.5" cy="946.8" r="5.4" fill="#83749a"/><circle cx="424.1" cy="946.8" r="5.4" fill="#e38493"/><circle cx="425.6" cy="961.4" r="5.4" fill="#8aa8c9"/><circle cx="410.5" cy="961.4" r="5.4" fill="#f0b07f"/><g stroke="#666666" stroke-width="1.6"><circle cx="524.4" cy="952.6" r="10.2" fill="none"/><circle cx="516.6" cy="960.2" r="5.2" fill="#fafafa"/></g><g fill="none" stroke="#666666" stroke-width="1.6"><rect x="615.5" y="944.4" width="21.700000000000045" height="19.0" rx="1.2"/><path d="M622.227,952.38 V949.53 H630.4730000000001 V952.38" stroke-width="1.9"/><path d="M626.35,949.53 V958.4599999999999" stroke-width="2.1"/><path d="M623.746,958.4599999999999 H628.9540000000001" stroke-width="1.9"/></g><circle cx="418" cy="1050.6" r="3.3" fill="#666666"/><g fill="none" stroke="#666666" stroke-width="1.5"><circle cx="408.6" cy="1061.1" r="2.7"/><circle cx="418" cy="1061.1" r="2.7"/><circle cx="427.3" cy="1061.1" r="2.7"/></g><path d="M512.8,1046.4 H533.4 Q534.6,1046.4 534.6,1047.6 V1058.8 Q534.6,1060 533.4,1060 H528.9 V1067 L521.6,1060 H512.8 Q511.6,1060 511.6,1058.8 V1047.6 Q511.6,1046.4 512.8,1046.4 Z" fill="none" stroke="#666666" stroke-width="1.6" stroke-linejoin="round"/><rect x="704.9" y="184.2" width="3.7" height="3.5" fill="#666666"/><rect x="704.9" y="189.6" width="3.7" height="16.2" fill="#666666"/><rect x="712.3" y="184.2" width="3.7" height="3.5" fill="#666666"/><rect x="712.3" y="189.6" width="3.7" height="16.2" fill="#666666"/><rect x="719.5" y="184.2" width="3.7" height="3.5" fill="#666666"/><rect x="719.5" y="189.6" width="3.7" height="16.2" fill="#666666"/><rect x="703.1" y="247.9" width="3.7" height="3.3" fill="#666666"/><rect x="708.5" y="247.9" width="16.6" height="3.3" fill="#666666"/><rect x="703.1" y="255.3" width="3.7" height="3.3" fill="#666666"/><rect x="708.5" y="255.3" width="16.6" height="3.3" fill="#666666"/><rect x="703.1" y="262.9" width="3.7" height="3.3" fill="#666666"/><rect x="708.5" y="262.9" width="16.6" height="3.3" fill="#666666"/><rect x="873.5" y="190.2" width="14.8" height="13.5" fill="none" stroke="#ffffff" stroke-width="2"/><path d="M876.3,197 H885.5 M880.9,192.8 V201.3" stroke="#eef4f7" stroke-width="1.6"/></svg><div style="position:absolute;left:1126px;top:551px;width:222px;height:38px;border-radius:19px;background:rgba(200,200,200,0.35)"></div><div style="position:absolute;left:1118px;top:543px;width:223px;height:39px;border-radius:19.5px;background:rgba(255,255,255,0.8);border:2px solid rgba(212,212,212,0.9);box-sizing:border-box"></div><div class="tk" style="position:absolute;left:1177.8px;top:551.06px;font-size:21.9px;line-height:1;color:#333;font-weight:normal;font-style:normal;white-space:nowrap;">Show Me</div><svg style="position:absolute;left:0px;top:0px;pointer-events:none" width="1566" height="1377" viewBox="0 0 1566 1377"><rect x="1141" y="552.5" width="19.7" height="3.5" rx="1" fill="#9f93ad"/><rect x="1141" y="558.1" width="25.1" height="3.7" rx="1" fill="#a0b4cf"/><rect x="1141" y="563.7" width="9" height="3.7" rx="1" fill="#ebbfa6"/><rect x="1141" y="569.3" width="14.2" height="3.7" rx="1" fill="#eb98a0"/></svg><svg style="position:absolute;left:0px;top:0px;pointer-events:none" width="1566" height="1377" viewBox="0 0 1566 1377"><line x1="179.7" y1="1085" x2="1060" y2="606" stroke="#e8412a" stroke-width="12"/><polygon points="1110.7,579.3 1043.9,581.1 1072.6,633.2" fill="#e8412a"/></svg>
</body></html>
